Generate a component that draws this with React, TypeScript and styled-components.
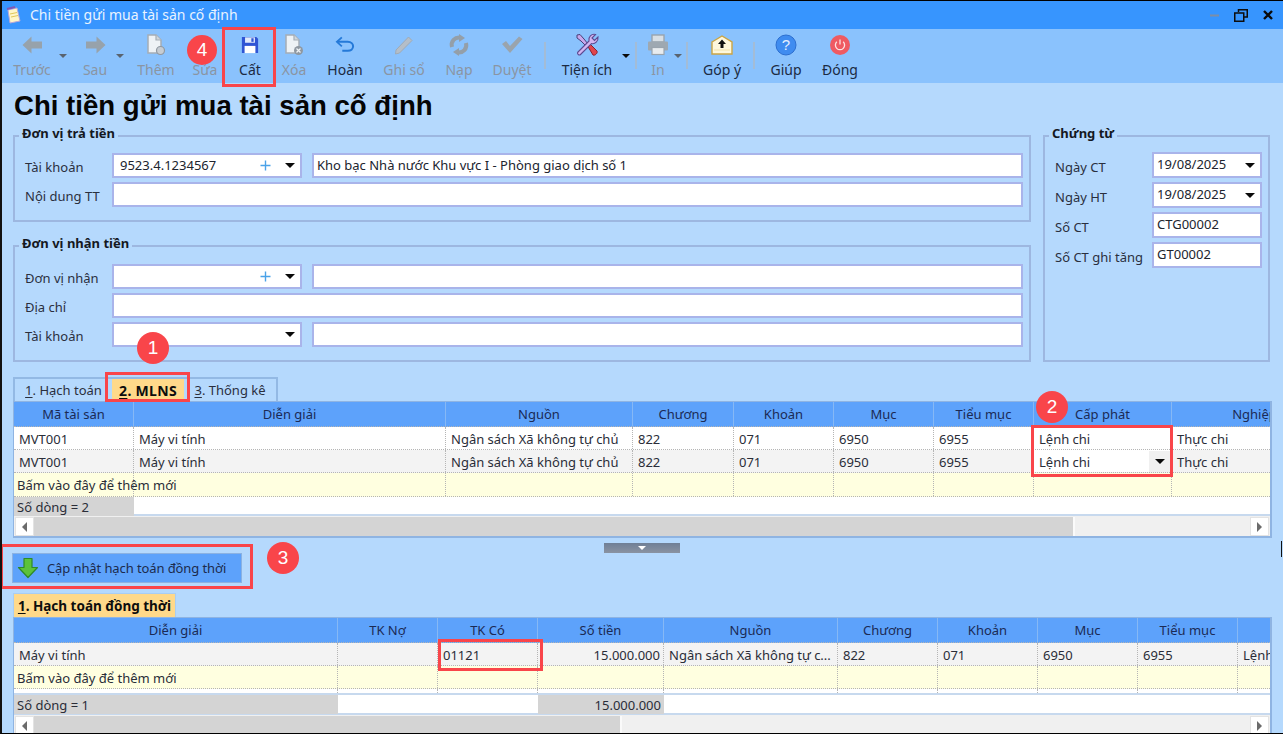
import React from "react";
import styled, { createGlobalStyle } from "styled-components";

const Global = createGlobalStyle`
  html, body { margin: 0; padding: 0; background: #b5d9fd; }
  * { box-sizing: border-box; }
  body { font-family: "Noto Sans", "Liberation Sans", sans-serif; font-size: 13px; color: #20242e; }
`;

const Root = styled.div`
  position: relative;
  width: 1283px;
  height: 734px;
  overflow: hidden;
  background: #b5d9fd;
  border-top: 1px solid #000;
  border-left: 2px solid #111;
  border-bottom: 1px solid #000;
`;

const TitleBar = styled.header`
  height: 28px;
  background: #3795fe;
  display: flex;
  align-items: center;
  padding: 0 10px 0 3px;
  color: #e9f3ff;
`;
const TitleText = styled.span`
  margin-left: 9px;
  font-size: 14px;
  line-height: 16px;
`;
const WindowControls = styled.div`
  margin-left: auto;
  display: flex;
  align-items: center;
  gap: 15px;
`;

const Toolbar = styled.nav`
  height: 54px;
  background: #8ac2fd;
  display: flex;
  align-items: flex-start;
  padding: 4px 0 0 10px;
`;
const ToolButton = styled.div<{ $w: number; $off?: boolean }>`
  width: ${(p) => p.$w}px;
  flex: none;
  display: flex;
  flex-direction: column;
  align-items: center;
  color: ${(p) => (p.$off ? "#8a95a3" : "#1c2a42")};
`;
const ToolIcon = styled.div`
  height: 24px;
  display: flex;
  align-items: center;
  justify-content: center;
`;
const ToolLabel = styled.span`
  margin-top: 4px;
  line-height: 18px;
  font-size: 14px;
  white-space: nowrap;
`;
const ToolCaret = styled.div<{ $w: number; $off?: boolean; $back?: number }>`
  width: ${(p) => p.$w}px;
  margin-left: ${(p) => -(p.$back || 0)}px;
  flex: none;
  height: 5px;
  margin-top: 21px;
  display: flex;
  justify-content: center;
  &::after {
    content: "";
    border-left: 4px solid transparent;
    border-right: 4px solid transparent;
    border-top: 4px solid ${(p) => (p.$off ? "#59636f" : "#0c0c0c")};
  }
`;
const ToolSep = styled.div<{ $w: number }>`
  width: ${(p) => p.$w}px;
  flex: none;
  height: 27px;
  margin-top: 9px;
  display: flex;
  justify-content: center;
  &::after {
    content: "";
    width: 2px;
    background: #a3bcd6;
  }
`;

const PageTitle = styled.h1`
  margin: 0;
  height: 45px;
  padding: 6px 0 0 12px;
  font-family: "Liberation Sans", sans-serif;
  font-weight: 700;
  font-size: 27.6px;
  line-height: 34px;
  color: #050505;
  white-space: nowrap;
`;

const FormArea = styled.section`
  display: grid;
  grid-template-columns: 1018px 227px;
  column-gap: 12px;
  padding-left: 11px;
`;
const LeftGroups = styled.div`
  display: flex;
  flex-direction: column;
  gap: 16px;
`;
const Group = styled.fieldset<{ $top?: number }>`
  margin: 0;
  min-width: 0;
  border: 2px solid #9db7e0;
  padding: ${(p) => p.$top ?? 9}px 6px 13px 10px;
`;
const Legend = styled.legend`
  margin-left: -6px;
  padding: 0 3px;
  height: 16px;
  line-height: 11px;
  font-weight: 700;
  font-size: 13px;
  color: #14181f;
  white-space: nowrap;
`;
const FieldGrid = styled.div`
  display: grid;
  grid-template-columns: 77px 190px 1fr;
  column-gap: 10px;
  row-gap: 4px;
  grid-auto-rows: 25px;
`;
const DocGrid = styled.div`
  display: grid;
  grid-template-columns: 87px 110px;
  column-gap: 10px;
  row-gap: 4px;
  grid-auto-rows: 26px;
`;
const Label = styled.label`
  display: flex;
  align-items: center;
  padding-top: 3px;
  white-space: nowrap;
  color: #2a2f3d;
`;
const Field = styled.div<{ $span?: boolean; $pad?: number }>`
  display: flex;
  align-items: center;
  background: #fff;
  border: 2px solid #a9b4ea;
  padding: 0 5px 0 ${(p) => p.$pad ?? 6}px;
  grid-column: ${(p) => (p.$span ? "span 2" : "auto")};
  color: #20242e;
  white-space: nowrap;
  overflow: hidden;
`;
const FieldText = styled.span`
  flex: 1;
  padding-bottom: 2px;
`;
const Caret = styled.span`
  flex: none;
  width: 0;
  height: 0;
  border-left: 5px solid transparent;
  border-right: 5px solid transparent;
  border-top: 5px solid #0a0a0a;
`;
const PlusMark = styled.svg`
  flex: none;
  margin-right: 14px;
`;

const TabStrip = styled.div<{ $mt: number }>`
  display: inline-flex;
  margin: ${(p) => p.$mt}px 0 0 11px;
  height: 24px;
  border: 2px solid #93b9e4;
  border-bottom: 0;
  vertical-align: top;
`;
const TabRow = styled.div`
  display: flex;
`;
const Tab = styled.div<{ $w: number; $active?: boolean }>`
  width: ${(p) => p.$w}px;
  display: flex;
  align-items: center;
  justify-content: center;
  background: ${(p) => (p.$active ? "#ffd98a" : "#b5d9fd")};
  font-weight: ${(p) => (p.$active ? 700 : 400)};
  font-size: ${(p) => (p.$active ? 14 : 13)}px;
  letter-spacing: ${(p) => (p.$active ? 0.3 : 0)}px;
  color: ${(p) => (p.$active ? "#0d0d0d" : "#2a2f3d")};
  white-space: nowrap;
  u { text-underline-offset: 2px; }
`;
const ActiveTab = styled.div`
  margin: 10px 0 0 11px;
  width: 163px;
  height: 24px;
  display: flex;
  align-items: center;
  justify-content: center;
  background: #ffd98a;
  border: 1px solid #a9cdf3;
  border-bottom: 0;
  font-weight: 700;
  font-size: 13.5px;
  color: #0d0d0d;
  white-space: nowrap;
  u { text-underline-offset: 2px; }
`;

const GridBox = styled.div<{ $h: number }>`
  margin-left: 11px;
  width: 1259px;
  height: ${(p) => p.$h}px;
  border: 1px solid #8fb4e2;
  border-right-width: 2px;
  border-bottom-width: 2px;
  background: #fff;
  overflow: hidden;
`;
const Row = styled.div<{ $cols: string; $h: number; $bg: string; $sum?: boolean }>`
  display: grid;
  grid-template-columns: ${(p) => p.$cols};
  height: ${(p) => p.$h}px;
  background: ${(p) => p.$bg};
  width: 1400px;
  border-bottom: ${(p) => (p.$sum ? "2px solid #c7d9ee" : "1px dotted #b5b5b5")};
`;
const HeadCell = styled.div`
  display: flex;
  align-items: center;
  justify-content: center;
  background: #5da2fb;
  border-right: 1px solid #86b8f5;
  color: #1b2a55;
  white-space: nowrap;
  padding-bottom: 1px;
`;
const Cell = styled.div<{ $right?: boolean; $bg?: string; $plain?: boolean; $pad?: number }>`
  display: flex;
  align-items: center;
  justify-content: ${(p) => (p.$right ? "flex-end" : "flex-start")};
  padding: 1px ${(p) => (p.$right ? 3 : 0)}px 0 ${(p) => p.$pad ?? 5}px;
  border-right: ${(p) => (p.$plain ? "0" : "1px dotted #b5b5b5")};
  background: ${(p) => p.$bg || "transparent"};
  white-space: nowrap;
  color: #2a2d38;
  min-width: 0;
`;
const CellText = styled.span`
  flex: 1;
`;
const CellDrop = styled.span`
  flex: none;
  align-self: stretch;
  width: 22px;
  background: #f0f0f0;
  display: flex;
  align-items: center;
  justify-content: center;
`;

const ScrollBar = styled.div<{ $h: number }>`
  height: ${(p) => p.$h}px;
  background: #f0f0f0;
  display: flex;
  align-items: stretch;
  padding: 1px;
`;
const ScrollBtn = styled.div<{ $dir: "l" | "r" }>`
  width: 19px;
  flex: none;
  background: #fff;
  border: 1px solid #e3e3e3;
  display: flex;
  align-items: center;
  justify-content: center;
  &::after {
    content: "";
    border-top: 5px solid transparent;
    border-bottom: 5px solid transparent;
    ${(p) => (p.$dir === "l" ? "border-right: 5px solid #6b6b6b;" : "border-left: 5px solid #6b6b6b;")}
  }
`;
const ScrollThumb = styled.div<{ $w: number }>`
  width: ${(p) => p.$w}px;
  flex: none;
  background: #d4d4d4;
  border-right: 2px solid #fafafa;
`;
const ScrollGap = styled.div`
  flex: 1;
`;

const SplitRow = styled.div`
  height: 15px;
  padding: 5px 0 0 602px;
`;
const Splitter = styled.div`
  width: 76px;
  height: 10px;
  background: linear-gradient(#6f7f96, #8a93a2);
  display: flex;
  justify-content: center;
  padding-top: 3px;
  &::after {
    content: "";
    width: 0;
    height: 0;
    border-left: 4px solid transparent;
    border-right: 4px solid transparent;
    border-top: 4px solid #fff;
  }
`;
const UpdateButton = styled.div`
  margin-left: 10px;
  width: 230px;
  height: 30px;
  background: #5da2fb;
  border: 1px solid #8bb2e2;
  display: flex;
  align-items: center;
  padding: 0 0 1px 4px;
  color: #1c2b4d;
  white-space: nowrap;
`;
const UpdateLabel = styled.span`
  margin-left: 8px;
  letter-spacing: -0.1px;
`;

const Annot = styled.div<{ $x: number; $y: number; $w: number; $h: number }>`
  position: absolute;
  left: ${(p) => p.$x}px;
  top: ${(p) => p.$y}px;
  width: ${(p) => p.$w}px;
  height: ${(p) => p.$h}px;
  border: 3px solid #f9454a;
  pointer-events: none;
`;
const Badge = styled.div<{ $x: number; $y: number; $r: number }>`
  position: absolute;
  left: ${(p) => p.$x - p.$r}px;
  top: ${(p) => p.$y - p.$r}px;
  width: ${(p) => p.$r * 2}px;
  height: ${(p) => p.$r * 2}px;
  border-radius: 50%;
  background: #f9454a;
  color: #fff;
  font-family: "Liberation Sans", sans-serif;
  font-size: 19px;
  display: flex;
  align-items: center;
  justify-content: center;
`;
const EdgeMark = styled.div`
  position: absolute;
  left: 1279px;
  top: 540px;
  width: 1px;
  height: 16px;
  background: #111;
`;

const G = "#97a2ab";

const ArrowLeft = () => (
  <svg width="21" height="18" viewBox="0 0 21 18"><path d="M9.5 0.5 L0.5 9 L9.5 17.5 V12.5 H20 V5.5 H9.5 Z" fill={G} /></svg>
);
const ArrowRight = () => (
  <svg width="21" height="18" viewBox="0 0 21 18"><path d="M11.5 0.5 L20.5 9 L11.5 17.5 V12.5 H1 V5.5 H11.5 Z" fill={G} /></svg>
);
const DocBase = ({ children }: { children?: React.ReactNode }) => (
  <svg width="20" height="22" viewBox="0 0 20 22">
    <path d="M2 1 H10 L15 6 V19 H2 Z" fill="#eef2f5" stroke="#a5adb5" strokeWidth="1.5" />
    <path d="M10 1 V6 H15" fill="#cfd6dc" stroke="#a5adb5" strokeWidth="1.2" />
    {children}
  </svg>
);
const DocAdd = () => (
  <DocBase><circle cx="14.5" cy="16.5" r="4" fill="#c6ccd2" stroke="#8f98a1" strokeWidth="1.2" /></DocBase>
);
const DocDelete = () => (
  <DocBase>
    <circle cx="14.5" cy="16.5" r="4.5" fill="#8f98a1" />
    <path d="M12.5 14.5 L16.5 18.5 M16.5 14.5 L12.5 18.5" stroke="#eef2f5" strokeWidth="1.3" />
  </DocBase>
);
const Pencil = () => (
  <svg width="22" height="22" viewBox="0 0 22 22">
    <path d="M3 16 L15.5 3 L19 6.5 L6.5 19 L2.5 20 Z" fill="#b4bec8" stroke="#a0abb5" strokeWidth="1" />
  </svg>
);
const Floppy = () => (
  <svg width="18" height="18" viewBox="0 0 20 20">
    <path d="M1 1 H17 L19 3 V19 H1 Z" fill="#2f55d4" />
    <rect x="4.5" y="1.5" width="11" height="6" fill="#dfe8fa" />
    <rect x="11.5" y="2.5" width="2.5" height="4" fill="#2f55d4" />
    <rect x="4" y="11" width="12" height="8" fill="#fff" />
  </svg>
);
const Undo = () => (
  <svg width="20" height="18" viewBox="0 0 22 20" fill="none">
    <path d="M3 6.5 H14 C18 6.5 20 9 20 11.5 C20 14.5 17.5 16.5 14 16.5 H8" stroke="#2479d8" strokeWidth="2.2" />
    <path d="M7.5 1.5 L2 6.5 L7.5 11.5" stroke="#2479d8" strokeWidth="2" />
  </svg>
);
const Reload = () => (
  <svg width="22" height="22" viewBox="0 0 22 22" fill="none" stroke="#949fa9" strokeWidth="4">
    <path d="M4 13 C2.5 7 7 3 12 3.5" />
    <path d="M18 9 C19.5 15 15 19 10 18.5" />
    <path d="M11 0 L17 4 L11 8 Z" fill="#949fa9" stroke="none" />
    <path d="M11 22 L5 18 L11 14 Z" fill="#949fa9" stroke="none" />
  </svg>
);
const Check = () => (
  <svg width="22" height="18" viewBox="0 0 22 18"><path d="M1 8 L5 5 L9 10 L18 0.5 L21.5 3 L9 17 Z" fill="#9aa4ad" /></svg>
);
const Tools = () => (
  <svg width="24" height="24" viewBox="0 0 24 24">
    <path d="M2 2 L5 1.5 L9 6 L13 11 L11 13 L6 8 L2 5 Z" fill="#c9a8ec" stroke="#4a3f78" strokeWidth="1" />
    <path d="M12 12 L14 10 L22 18 C23 20 20 23 18 22 Z" fill="#e0444c" stroke="#8a2030" strokeWidth="1" />
    <path d="M3 19 L14 8 C13 4 16.5 0.5 20.5 1.5 L17 5 L19.5 7.5 L23 4 C23.5 8 20 11.5 16.5 10.5 L5.5 21.5 C4 23 1.5 20.5 3 19 Z" fill="#d3b6f1" stroke="#5d4a92" strokeWidth="1.1" />
  </svg>
);
const Printer = () => (
  <svg width="22" height="22" viewBox="0 0 22 22">
    <rect x="5" y="1" width="12" height="7" fill="#d9dfe4" stroke="#9aa4ad" strokeWidth="1.4" />
    <rect x="1" y="7.5" width="20" height="9" rx="1" fill="#9ea8b1" />
    <rect x="5" y="13.5" width="12" height="7" fill="#e8ecef" stroke="#9aa4ad" strokeWidth="1.2" />
  </svg>
);
const Mail = () => (
  <svg width="22" height="20" viewBox="0 0 22 20">
    <path d="M1 7 L11 1 L21 7 V19 H1 Z" fill="#fff8dc" stroke="#cba545" strokeWidth="1.4" />
    <path d="M3 15 H19" stroke="#f3e2a8" strokeWidth="1" />
    <path d="M11 4.5 L15 9 H12.5 V13 H9.5 V9 H7 Z" fill="#111" />
  </svg>
);
const Help = () => (
  <svg width="22" height="22" viewBox="0 0 22 22">
    <circle cx="11" cy="11" r="10" fill="#3f8cf0" stroke="#2c6fd0" strokeWidth="1" />
    <text x="11" y="16" textAnchor="middle" fontFamily="Liberation Sans, sans-serif" fontSize="15" fill="#e6f0ff">?</text>
  </svg>
);
const Power = () => (
  <svg width="22" height="22" viewBox="0 0 22 22" fill="none">
    <circle cx="11" cy="11" r="10" fill="#ef5a62" />
    <path d="M7.8 7.8 A4.6 4.6 0 1 0 14.2 7.8" stroke="#fde2e2" strokeWidth="1.3" />
    <path d="M11 5.5 V10.5" stroke="#fde2e2" strokeWidth="1.3" />
  </svg>
);
const NoteIcon = () => (
  <svg width="16" height="18" viewBox="0 0 16 18">
    <path d="M3 4 L12 2 L15 15 L5 17 Z" fill="#fff6c8" stroke="#b9a8d8" strokeWidth="1" />
    <path d="M2 3 L10 1" stroke="#7f5ab5" strokeWidth="2" />
    <path d="M5 8 L12 6.5 M6 11 L13 9.5" stroke="#e1c65a" strokeWidth="1" />
  </svg>
);
const Restore = () => (
  <svg width="14" height="13" viewBox="0 0 14 13" fill="none" stroke="#0d0d0d">
    <path d="M4.5 3 V0.75 H13.25 V8 H10" strokeWidth="1.5" />
    <rect x="0.75" y="4" width="9" height="8.25" fill="none" strokeWidth="1.5" />
  </svg>
);
const CloseX = () => (
  <svg width="10" height="10" viewBox="0 0 10 10" stroke="#0a0a0a" strokeWidth="2.4"><path d="M1 1 L9 9 M9 1 L1 9" /></svg>
);
const Minimize = () => (
  <svg width="9" height="3" viewBox="0 0 9 3"><rect width="9" height="2" y="0.5" fill="#7d8ea6" /></svg>
);
const Plus = () => (
  <PlusMark width="11" height="11" viewBox="0 0 11 11" stroke="#4aa2e8" strokeWidth="1.4"><path d="M5.5 0.5 V10.5 M0.5 5.5 H10.5" /></PlusMark>
);
const DownArrow = () => (
  <svg width="22" height="22" viewBox="0 0 22 22">
    <path d="M7 1.5 H15 V10.5 H20.5 L11 20.5 L1.5 10.5 H7 Z" fill="#5cc23a" stroke="#2f8a26" strokeWidth="1.2" strokeLinejoin="round" />
  </svg>
);

const cols1 = "120px 312px 187px 101px 100px 100px 100px 138px 184px";
const cols2 = "324px 100px 100px 126px 174px 100px 100px 100px 100px 176px";

const head1 = ["Mã tài sản", "Diễn giải", "Nguồn", "Chương", "Khoản", "Mục", "Tiểu mục", "Cấp phát", "Nghiệp vụ"];
const vals1 = ["MVT001", "Máy vi tính", "Ngân sách Xã không tự chủ", "822", "071", "6950", "6955", "Lệnh chi", "Thực chi"];
const head2 = ["Diễn giải", "TK Nợ", "TK Có", "Số tiền", "Nguồn", "Chương", "Khoản", "Mục", "Tiểu mục", ""];

export default function App() {
  return (
    <Root>
      <Global />
      <TitleBar>
        <NoteIcon />
        <TitleText>Chi tiền gửi mua tài sản cố định</TitleText>
        <WindowControls>
          <Minimize />
          <Restore />
          <CloseX />
        </WindowControls>
      </TitleBar>

      <Toolbar>
        <ToolButton $w={40} $off><ToolIcon><ArrowLeft /></ToolIcon><ToolLabel>Trước</ToolLabel></ToolButton>
        <ToolCaret $w={22} $off />
        <ToolButton $w={42} $off><ToolIcon><ArrowRight /></ToolIcon><ToolLabel>Sau</ToolLabel></ToolButton>
        <ToolCaret $w={8} $off />
        <ToolButton $w={64} $off><ToolIcon><DocAdd /></ToolIcon><ToolLabel>Thêm</ToolLabel></ToolButton>
        <ToolButton $w={34} $off><ToolIcon><Pencil /></ToolIcon><ToolLabel>Sửa</ToolLabel></ToolButton>
        <ToolButton $w={56}><ToolIcon><Floppy /></ToolIcon><ToolLabel>Cất</ToolLabel></ToolButton>
        <ToolButton $w={32} $off><ToolIcon><DocDelete /></ToolIcon><ToolLabel>Xóa</ToolLabel></ToolButton>
        <ToolButton $w={70}><ToolIcon><Undo /></ToolIcon><ToolLabel>Hoàn</ToolLabel></ToolButton>
        <ToolButton $w={48} $off><ToolIcon><Pencil /></ToolIcon><ToolLabel>Ghi sổ</ToolLabel></ToolButton>
        <ToolButton $w={62} $off><ToolIcon><Reload /></ToolIcon><ToolLabel>Nạp</ToolLabel></ToolButton>
        <ToolButton $w={44} $off><ToolIcon><Check /></ToolIcon><ToolLabel>Duyệt</ToolLabel></ToolButton>
        <ToolSep $w={22} />
        <ToolButton $w={62}><ToolIcon><Tools /></ToolIcon><ToolLabel>Tiện ích</ToolLabel></ToolButton>
        <ToolCaret $w={16} />
        <ToolSep $w={4} />
        <ToolButton $w={40} $off><ToolIcon><Printer /></ToolIcon><ToolLabel>In</ToolLabel></ToolButton>
        <ToolCaret $w={8} $off $back={4} />
        <ToolSep $w={10} />
        <ToolButton $w={60}><ToolIcon><Mail /></ToolIcon><ToolLabel>Góp ý</ToolLabel></ToolButton>
        <ToolSep $w={4} />
        <ToolButton $w={60}><ToolIcon><Help /></ToolIcon><ToolLabel>Giúp</ToolLabel></ToolButton>
        <ToolButton $w={48}><ToolIcon><Power /></ToolIcon><ToolLabel>Đóng</ToolLabel></ToolButton>
      </Toolbar>

      <PageTitle>Chi tiền gửi mua tài sản cố định</PageTitle>

      <FormArea>
        <LeftGroups>
          <Group>
            <Legend>Đơn vị trả tiền</Legend>
            <FieldGrid>
              <Label>Tài khoản</Label>
              <Field><FieldText>9523.4.1234567</FieldText><Plus /><Caret /></Field>
              <Field $pad={3}><FieldText>Kho bạc Nhà nước Khu vực I - Phòng giao dịch số 1</FieldText></Field>
              <Label>Nội dung TT</Label>
              <Field $span />
            </FieldGrid>
          </Group>
          <Group $top={10}>
            <Legend>Đơn vị nhận tiền</Legend>
            <FieldGrid>
              <Label>Đơn vị nhận</Label>
              <Field><FieldText /><Plus /><Caret /></Field>
              <Field />
              <Label>Địa chỉ</Label>
              <Field $span />
              <Label>Tài khoản</Label>
              <Field><FieldText /><Caret /></Field>
              <Field />
            </FieldGrid>
          </Group>
        </LeftGroups>
        <Group $top={8}>
          <Legend>Chứng từ</Legend>
          <DocGrid>
            <Label>Ngày CT</Label>
            <Field $pad={3}><FieldText>19/08/2025</FieldText><Caret /></Field>
            <Label>Ngày HT</Label>
            <Field $pad={3}><FieldText>19/08/2025</FieldText><Caret /></Field>
            <Label>Số CT</Label>
            <Field $pad={3}><FieldText>CTG00002</FieldText></Field>
            <Label>Số CT ghi tăng</Label>
            <Field $pad={3}><FieldText>GT00002</FieldText></Field>
          </DocGrid>
        </Group>
      </FormArea>

      <TabRow>
        <TabStrip $mt={15}>
          <Tab $w={97}><span><u>1</u>. Hạch toán</span></Tab>
          <Tab $w={72} $active><span><u>2</u>. MLNS</span></Tab>
          <Tab $w={92}><span><u>3</u>. Thống kê</span></Tab>
        </TabStrip>
      </TabRow>

      <GridBox $h={137}>
        <Row $cols={cols1} $h={25} $bg="#5da2fb">
          {head1.map((h) => <HeadCell key={h}>{h}</HeadCell>)}
        </Row>
        <Row $cols={cols1} $h={23} $bg="#fff">
          {vals1.map((v, i) => <Cell key={i}>{v}</Cell>)}
        </Row>
        <Row $cols={cols1} $h={23} $bg="#f3f3f3">
          {vals1.map((v, i) =>
            i === 7 ? (
              <Cell key={i} $bg="#fff"><CellText>{v}</CellText><CellDrop><Caret /></CellDrop></Cell>
            ) : (
              <Cell key={i}>{v}</Cell>
            )
          )}
        </Row>
        <Row $cols={cols1} $h={24} $bg="#ffffe0">
          {vals1.map((_, i) => <Cell key={i} $pad={3}>{i === 0 ? "Bấm vào đây để thêm mới" : ""}</Cell>)}
        </Row>
        <Row $cols={cols1} $h={19} $bg="#fff" $sum>
          <Cell $bg="#d4d4d4" $plain $pad={3}>Số dòng = 2</Cell>
        </Row>
        <ScrollBar $h={21}>
          <ScrollBtn $dir="l" />
          <ScrollThumb $w={1041} />
          <ScrollGap />
          <ScrollBtn $dir="r" />
        </ScrollBar>
      </GridBox>

      <SplitRow><Splitter /></SplitRow>

      <UpdateButton>
        <DownArrow />
        <UpdateLabel>Cập nhật hạch toán đồng thời</UpdateLabel>
      </UpdateButton>

      <ActiveTab><span><u>1</u>. Hạch toán đồng thời</span></ActiveTab>

      <GridBox $h={130}>
        <Row $cols={cols2} $h={25} $bg="#5da2fb">
          {head2.map((h, i) => <HeadCell key={i}>{h}</HeadCell>)}
        </Row>
        <Row $cols={cols2} $h={23} $bg="#f3f3f3">
          <Cell>Máy vi tính</Cell>
          <Cell />
          <Cell>01121</Cell>
          <Cell $right>15.000.000</Cell>
          <Cell>Ngân sách Xã không tự c...</Cell>
          <Cell>822</Cell>
          <Cell>071</Cell>
          <Cell>6950</Cell>
          <Cell>6955</Cell>
          <Cell>Lệnh chi</Cell>
        </Row>
        <Row $cols={cols2} $h={23} $bg="#ffffe0">
          <Cell $pad={3}>Bấm vào đây để thêm mới</Cell>
          {head2.slice(1).map((_, i) => <Cell key={i} />)}
        </Row>
        <Row $cols={cols2} $h={6} $bg="#fff" $sum>
          {head2.map((_, i) => <Cell key={i} />)}
        </Row>
        <Row $cols={cols2} $h={20} $bg="#fff" $sum>
          <Cell $bg="#d4d4d4" $plain $pad={3}>Số dòng = 1</Cell>
          <Cell $plain />
          <Cell $plain />
          <Cell $bg="#d4d4d4" $plain $right>15.000.000</Cell>
        </Row>
        <ScrollBar $h={21}>
          <ScrollBtn $dir="l" />
          <ScrollThumb $w={588} />
          <ScrollGap />
          <ScrollBtn $dir="r" />
        </ScrollBar>
      </GridBox>

      <Annot $x={220} $y={26} $w={54} $h={60} />
      <Annot $x={103} $y={371} $w={85} $h={30} />
      <Annot $x={1029} $y={424} $w={142} $h={52} />
      <Annot $x={-2} $y={543} $w={253} $h={45} />
      <Annot $x={436} $y={638} $w={105} $h={32} />
      <Badge $x={200} $y={49} $r={15}>4</Badge>
      <Badge $x={151} $y={347} $r={16}>1</Badge>
      <Badge $x={1050} $y={406} $r={16}>2</Badge>
      <Badge $x={281} $y={557} $r={16}>3</Badge>
      <EdgeMark />
    </Root>
  );
}
